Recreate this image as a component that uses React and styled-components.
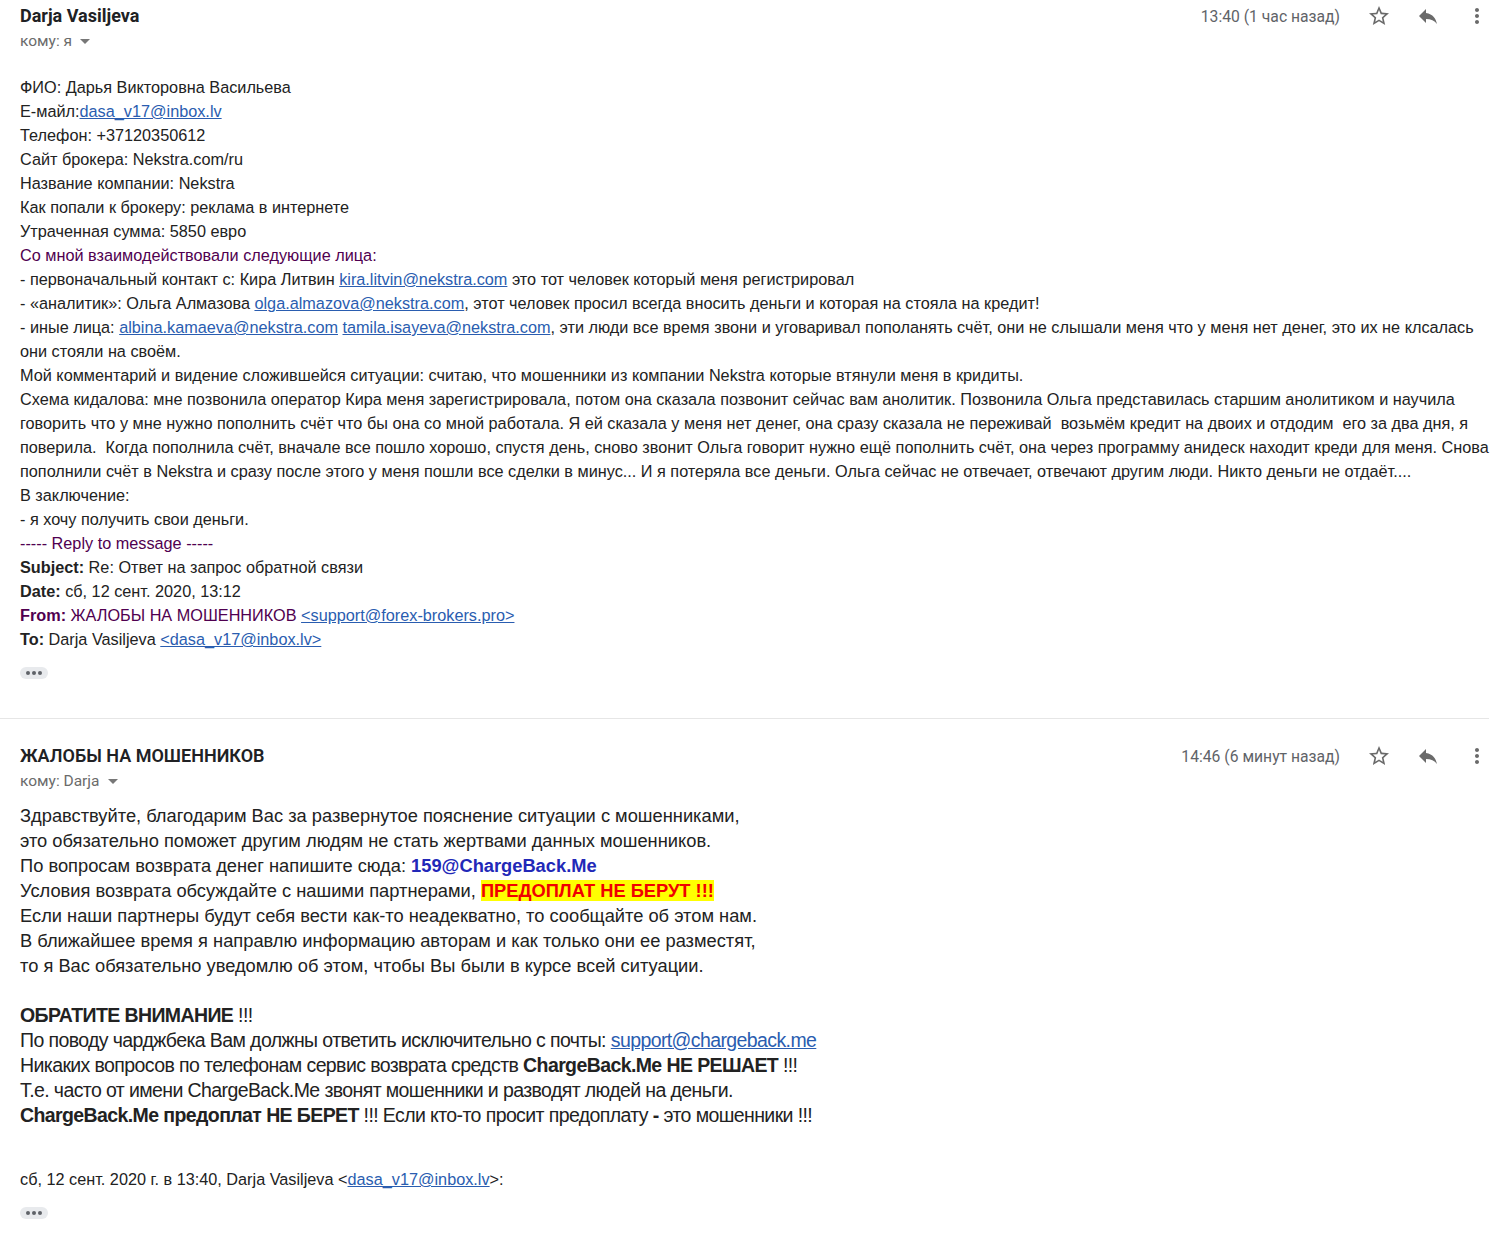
import React from "react";
import styled, { createGlobalStyle } from "styled-components";
import { MdStarBorder, MdReply, MdMoreVert } from "react-icons/md";

const GlobalStyle = createGlobalStyle`
  html, body { margin: 0; padding: 0; background: #fff; }
  body { font-family: "Liberation Sans", Arial, sans-serif; color: #222; }
`;

const Page = styled.div`
  width: 1508px;
  display: flex;
  flex-direction: column;
`;

const Message = styled.section`
  width: 1489px;
  box-sizing: border-box;
  padding: ${(p) => p.$top}px 0 ${(p) => p.$bottom}px 20px;
  border-bottom: ${(p) => (p.$divider ? "1px solid #e6e6e6" : "none")};
`;

const TopRow = styled.div`
  display: flex;
  align-items: center;
  justify-content: space-between;
  height: 24px;
`;

const Sender = styled.div`
  font-family: Roboto, "Liberation Sans", sans-serif;
  font-weight: ${(p) => p.$weight || 700};
  font-size: ${(p) => p.$size || 18}px;
  line-height: 22px;
  color: #202124;
`;

const Meta = styled.div`
  display: flex;
  align-items: center;
  gap: 25px;
`;

const Time = styled.span`
  font-family: Roboto, "Liberation Sans", sans-serif;
  font-size: 15.7px;
  color: #5f6368;
  margin-right: 2px;
`;

const IconBtn = styled.span`
  width: 24px;
  height: 24px;
  display: flex;
  align-items: center;
  justify-content: center;
  color: #6a6a6a;
`;

const Recipient = styled.div`
  margin-top: 3px;
  height: 20px;
  display: flex;
  align-items: center;
  font-family: Roboto, "Liberation Sans", sans-serif;
  font-size: 15.5px;
  line-height: 20px;
  color: #6b6b6b;
`;

const Caret = styled.span`
  width: 0;
  height: 0;
  margin-left: 8px;
  margin-top: 1px;
  border-left: 5px solid transparent;
  border-right: 5px solid transparent;
  border-top: 5px solid #777;
`;

const Body = styled.div`
  margin-top: ${(p) => p.$mt}px;
  display: flex;
  flex-direction: column;
`;

const Line = styled.div`
  white-space: pre;
  font-family: "Liberation Sans", Arial, sans-serif;
  font-size: ${(p) => p.$size || 16.25}px;
  line-height: ${(p) => p.$lh || 24}px;
  height: ${(p) => p.$lh || 24}px;
  color: ${(p) => (p.$purple ? "#500050" : "#222")};
  letter-spacing: ${(p) => p.$ls || 0}px;
`;

const NarrowLine = styled(Line)`
  font-size: 19.5px;
  letter-spacing: -0.6px;
`;

const Link = styled.a`
  color: #2a5db0;
  text-decoration: underline;
`;

const Strong = styled.b`
  font-weight: 700;
  color: inherit;
`;

const BlueStrong = styled.b`
  font-weight: 700;
  color: #2228b8;
`;

const Highlight = styled.b`
  font-weight: 700;
  color: #f00000;
  background: #ffff00;
`;

const QuoteLine = styled(Line)`
  margin-top: ${(p) => p.$mt || 0}px;
`;

const Ellipsis = styled.button`
  margin-top: 16px;
  width: 28px;
  height: 12px;
  padding: 0;
  border: none;
  border-radius: 6px;
  background: #e8eaed;
  display: flex;
  align-items: center;
  justify-content: center;
  gap: 2px;
  cursor: pointer;
`;

const Dot = styled.span`
  width: 4px;
  height: 4px;
  border-radius: 50%;
  background: #5f6368;
`;

function Header({ name, weight, to, time }) {
  return (
    <div>
      <TopRow>
        <Sender $weight={weight}>{name}</Sender>
        <Meta>
          <Time>{time}</Time>
          <IconBtn><MdStarBorder size={24} /></IconBtn>
          <IconBtn><MdReply size={24} /></IconBtn>
          <IconBtn><MdMoreVert size={24} /></IconBtn>
        </Meta>
      </TopRow>
      <Recipient>
        кому: {to}
        <Caret />
      </Recipient>
    </div>
  );
}

function More() {
  return (
    <Ellipsis aria-label="Показать сокращенный контент">
      <Dot />
      <Dot />
      <Dot />
    </Ellipsis>
  );
}

export default function App() {
  return (
    <Page>
      <GlobalStyle />
      <Message $top={4} $bottom={39} $divider>
        <Header name="Darja Vasiljeva" to="я" time="13:40 (1 час назад)" />
        <Body $mt={24}>
          <Line>ФИО: Дарья Викторовна Васильева</Line>
          <Line>Е-майл:<Link href="#">dasa_v17@inbox.lv</Link></Line>
          <Line>Телефон: +37120350612</Line>
          <Line>Сайт брокера: Nekstra.com/ru</Line>
          <Line>Название компании: Nekstra</Line>
          <Line>Как попали к брокеру: реклама в интернете</Line>
          <Line>Утраченная сумма: 5850 евро</Line>
          <Line $purple>Со мной взаимодействовали следующие лица:</Line>
          <Line>- первоначальный контакт с: Кира Литвин <Link href="#">kira.litvin@nekstra.com</Link> это тот человек который меня регистрировал</Line>
          <Line>- «аналитик»: Ольга Алмазова <Link href="#">olga.almazova@nekstra.com</Link>, этот человек просил всегда вносить деньги и которая на стояла на кредит!</Line>
          <Line>- иные лица: <Link href="#">albina.kamaeva@nekstra.com</Link> <Link href="#">tamila.isayeva@nekstra.com</Link>, эти люди все время звони и уговаривал пополанять счёт, они не слышали меня что у меня нет денег, это их не клсалась</Line>
          <Line>они стояли на своём.</Line>
          <Line>Мой комментарий и видение сложившейся ситуации: считаю, что мошенники из компании Nekstra которые втянули меня в кридиты.</Line>
          <Line>Схема кидалова: мне позвонила оператор Кира меня зарегистрировала, потом она сказала позвонит сейчас вам анолитик. Позвонила Ольга представилась старшим анолитиком и научила</Line>
          <Line>говорить что у мне нужно пополнить счёт что бы она со мной работала. Я ей сказала у меня нет денег, она сразу сказала не переживай  возьмём кредит на двоих и отдодим  его за два дня, я</Line>
          <Line>поверила.  Когда пополнила счёт, вначале все пошло хорошо, спустя день, сново звонит Ольга говорит нужно ещё пополнить счёт, она через программу анидеск находит креди для меня. Снова</Line>
          <Line>пополнили счёт в Nekstra и сразу после этого у меня пошли все сделки в минус... И я потеряла все деньги. Ольга сейчас не отвечает, отвечают другим люди. Никто деньги не отдаёт....</Line>
          <Line>В заключение:</Line>
          <Line>- я хочу получить свои деньги.</Line>
          <Line $purple>----- Reply to message -----</Line>
          <Line><Strong>Subject:</Strong> Re: Ответ на запрос обратной связи</Line>
          <Line><Strong>Date:</Strong> сб, 12 сент. 2020, 13:12</Line>
          <Line $purple><Strong>From:</Strong> ЖАЛОБЫ НА МОШЕННИКОВ <Link href="#">&lt;support@forex-brokers.pro&gt;</Link></Line>
          <Line><Strong>To:</Strong> Darja Vasiljeva <Link href="#">&lt;dasa_v17@inbox.lv&gt;</Link></Line>
        </Body>
        <More />
      </Message>

      <Message $top={25} $bottom={20}>
        <Header name="ЖАЛОБЫ НА МОШЕННИКОВ" weight={600} to="Darja" time="14:46 (6 минут назад)" />
        <Body $mt={12}>
          <Line $size={18.3} $lh={25}>Здравствуйте, благодарим Вас за развернутое пояснение ситуации с мошенниками,</Line>
          <Line $size={18.3} $lh={25}>это обязательно поможет другим людям не стать жертвами данных мошенников.</Line>
          <Line $size={18.3} $lh={25}>По вопросам возврата денег напишите сюда: <BlueStrong>159@ChargeBack.Me</BlueStrong></Line>
          <Line $size={18.3} $lh={25}>Условия возврата обсуждайте с нашими партнерами, <Highlight>ПРЕДОПЛАТ НЕ БЕРУТ !!!</Highlight></Line>
          <Line $size={18.3} $lh={25}>Если наши партнеры будут себя вести как-то неадекватно, то сообщайте об этом нам.</Line>
          <Line $size={18.3} $lh={25}>В ближайшее время я направлю информацию авторам и как только они ее разместят,</Line>
          <Line $size={18.3} $lh={25}>то я Вас обязательно уведомлю об этом, чтобы Вы были в курсе всей ситуации.</Line>
          <Line $size={18.3} $lh={25}> </Line>
          <NarrowLine $lh={25}><Strong>ОБРАТИТЕ ВНИМАНИЕ</Strong> !!!</NarrowLine>
          <NarrowLine $lh={25}>По поводу чарджбека Вам должны ответить исключительно с почты: <Link href="#">support@chargeback.me</Link></NarrowLine>
          <NarrowLine $lh={25}>Никаких вопросов по телефонам сервис возврата средств <Strong>ChargeBack.Me НЕ РЕШАЕТ</Strong> !!!</NarrowLine>
          <NarrowLine $lh={25}>Т.е. часто от имени ChargeBack.Me звонят мошенники и разводят людей на деньги.</NarrowLine>
          <NarrowLine $lh={25}><Strong>ChargeBack.Me предоплат НЕ БЕРЕТ</Strong> !!! Если кто-то просит предоплату <Strong>-</Strong> это мошенники !!!</NarrowLine>
          <QuoteLine $mt={39}>сб, 12 сент. 2020 г. в 13:40, Darja Vasiljeva &lt;<Link href="#">dasa_v17@inbox.lv</Link>&gt;:</QuoteLine>
        </Body>
        <More />
      </Message>
    </Page>
  );
}
